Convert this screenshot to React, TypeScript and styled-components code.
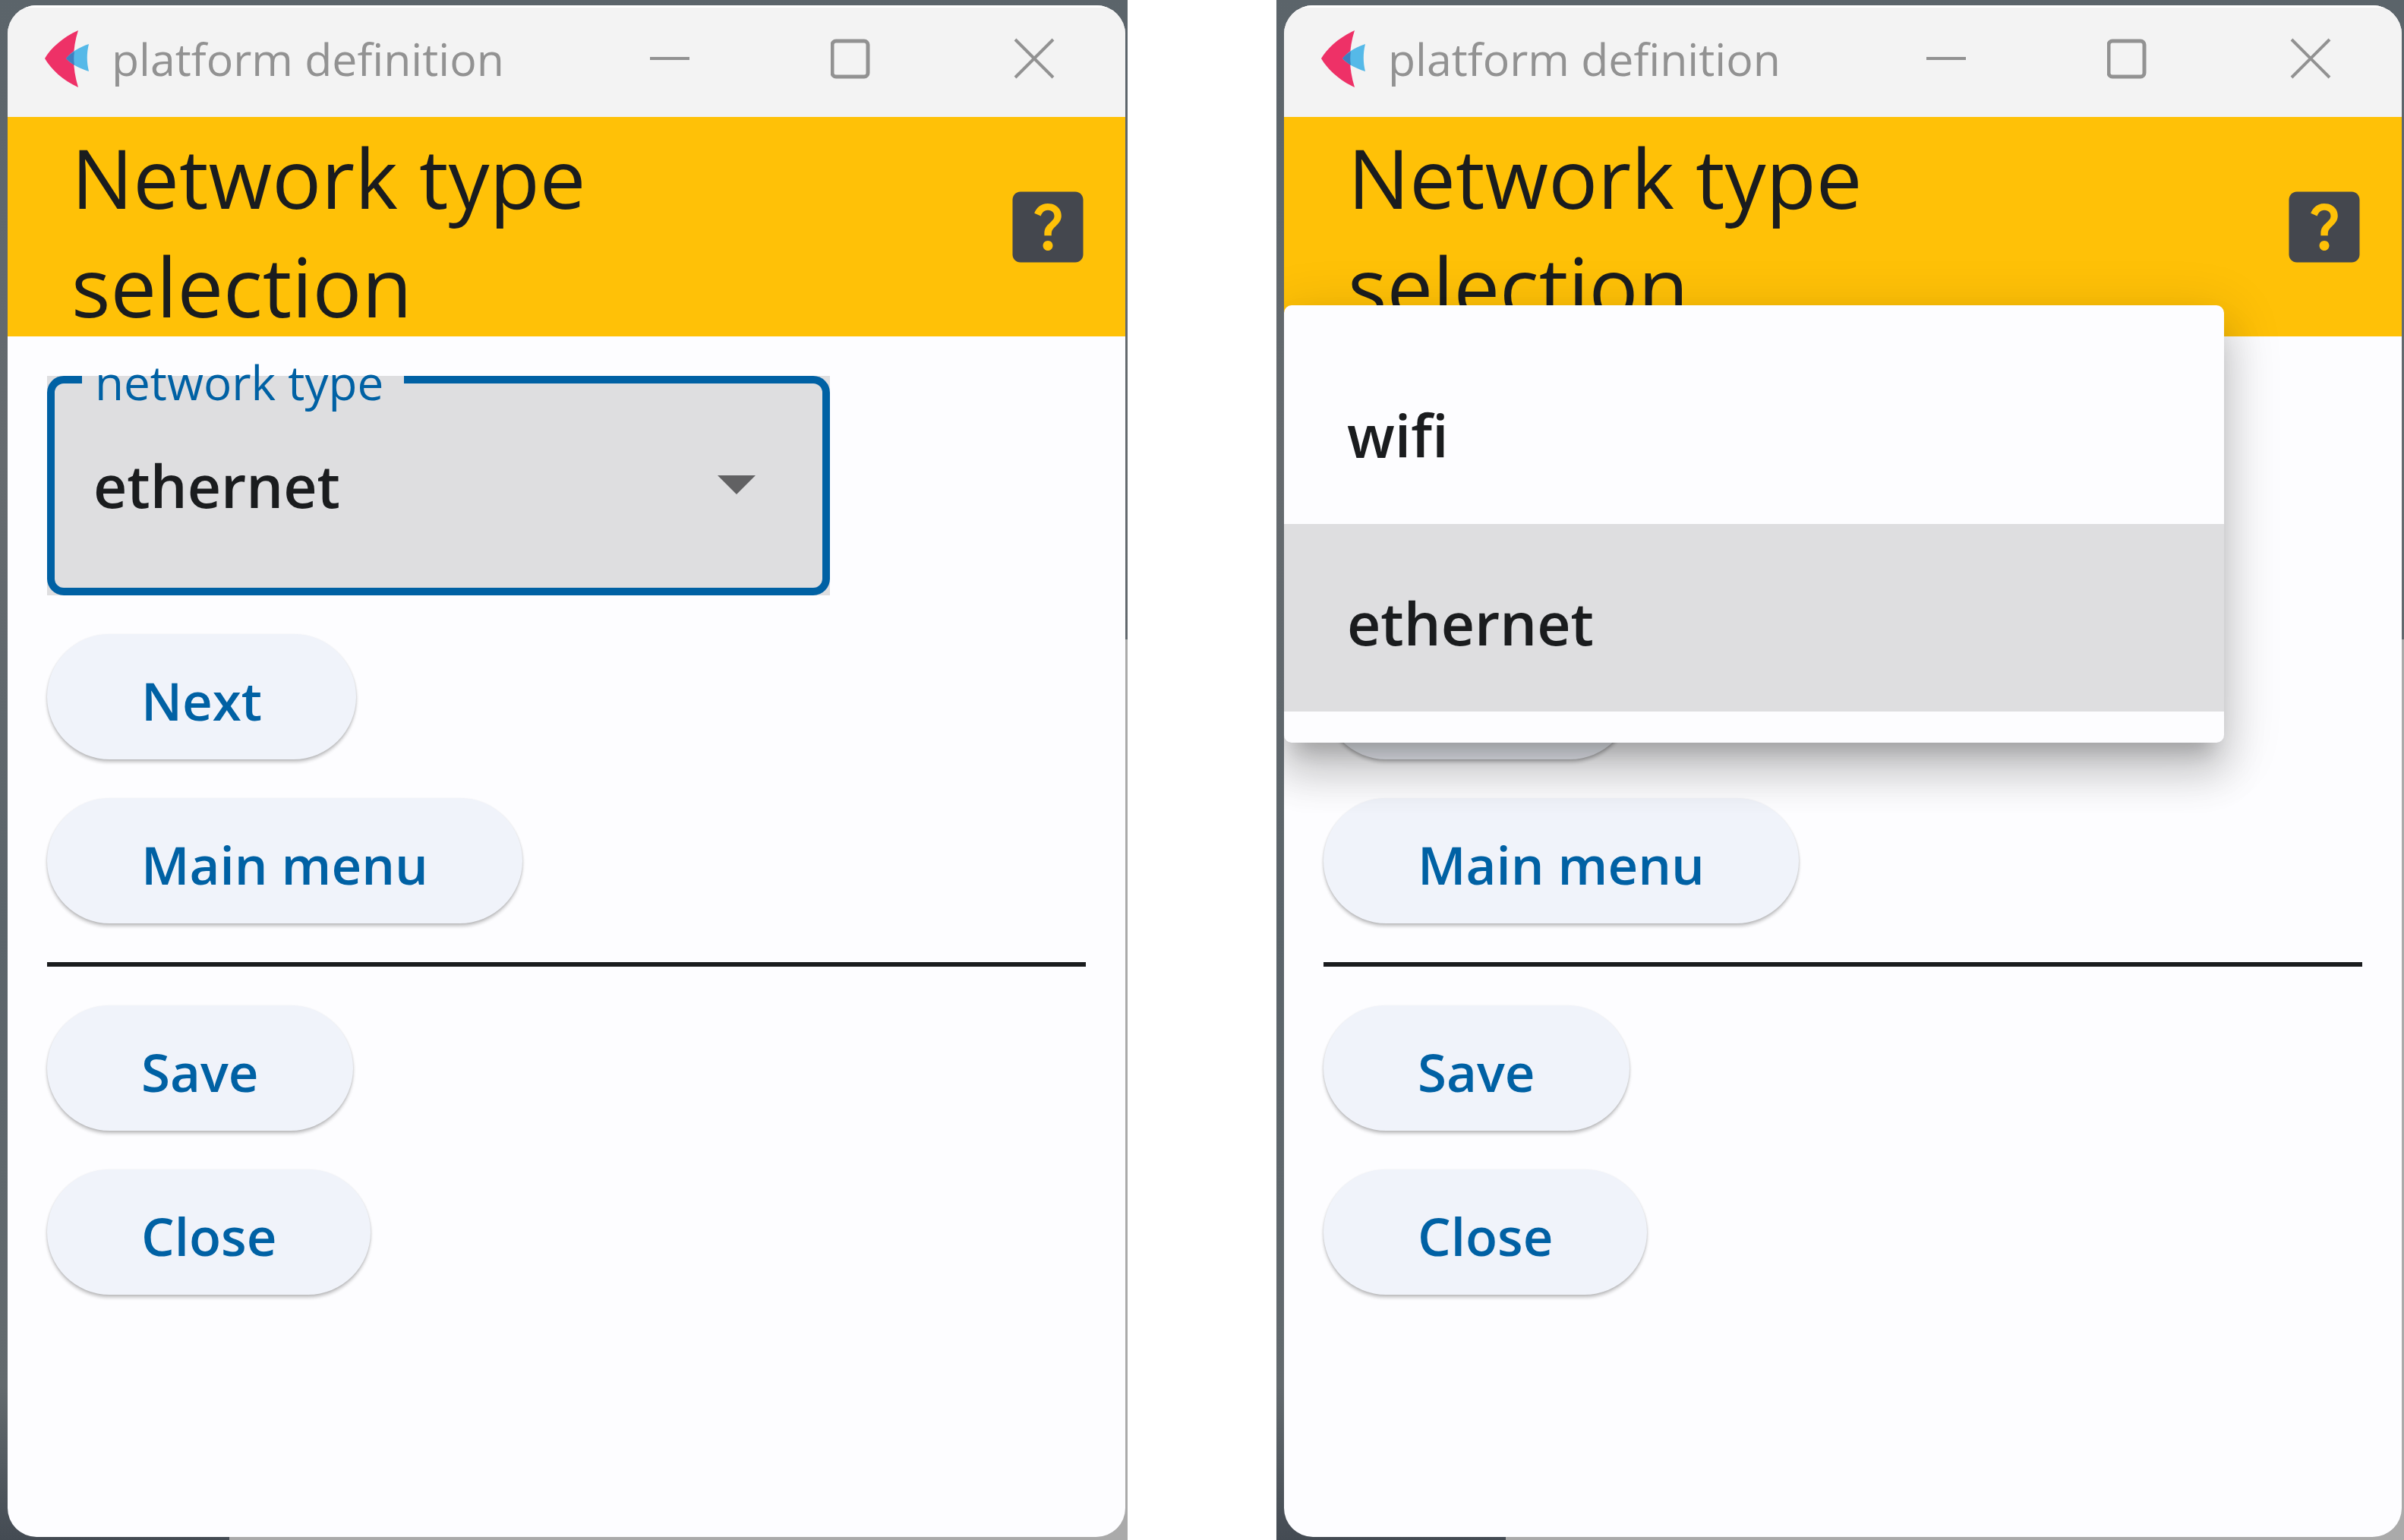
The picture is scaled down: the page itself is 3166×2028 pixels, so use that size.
import React, { useId } from "react";
import styled, { createGlobalStyle } from "styled-components";
import { MdHelpCenter } from "react-icons/md";

const color = {
  surface: "#fdfdff",
  titleBar: "#f3f3f3",
  titleText: "#929292",
  amber: "#ffc107",
  ink: "#1a1c1e",
  icon: "#44474e",
  primary: "#0061a4",
  tonal: "#f0f3fa",
  focus: "#dedee0",
};

const GlobalStyle = createGlobalStyle`
  *, *::before, *::after { box-sizing: border-box; }
  body {
    margin: 0;
    background: #ffffff;
    font-family: "Open Sans", "Noto Sans", sans-serif;
    color: ${color.ink};
  }
  button, select { font-family: inherit; }
`;

const Page = styled.main`
  display: flex;
  gap: 196px;
  min-height: 100vh;
`;

const Desktop = styled.section`
  display: flex;
  flex: 1 1 0;
  min-width: 0;
  padding: 7px 3px 4px 10px;
  background:
    linear-gradient(#aaaaaa, #aaaaaa) right bottom / calc(100% - 302px) 4px no-repeat,
    linear-gradient(transparent 842px, #aaaaaa 842px) right top / 40px 100% no-repeat,
    linear-gradient(#5b646a, #666b6f 30%, #5b646a 60%, #636a6e 90%, #444b53);
`;

const Window = styled.div`
  display: flex;
  flex-direction: column;
  flex: 1;
  min-width: 0;
  overflow: hidden;
  border-radius: 38px;
  background: ${color.surface};
`;

const TitleBar = styled.header`
  display: flex;
  align-items: center;
  height: 147px;
  padding: 0 0 10px 49px;
  border-top: 3px solid #ffffff;
  background: ${color.titleBar};
`;

const Logo = styled.svg`
  flex: none;
  width: 60px;
  height: 76px;
`;

const WindowTitle = styled.span`
  flex: 1;
  padding-left: 28px;
  color: ${color.titleText};
  font-size: 59px;
  line-height: 80px;
  white-space: nowrap;
`;

const CaptionButton = styled.button`
  display: flex;
  align-items: center;
  justify-content: center;
  width: 240px;
  height: 100%;
  padding: 0;
  border: 0;
  background: none;
  color: #929292;

  svg {
    width: 56px;
    height: 56px;
    fill: none;
    stroke: currentColor;
    stroke-width: 4;
  }
`;

const AppBar = styled.div`
  display: flex;
  align-items: center;
  height: 289px;
  padding: 0 40px 0 84px;
  background: ${color.amber};
`;

const Heading = styled.h1`
  flex: 1;
  margin: 0;
  padding: 12px 320px 0 0;
  font-size: 108px;
  font-weight: 400;
  line-height: 143px;
`;

const HelpButton = styled.button`
  display: flex;
  padding: 0;
  border: 0;
  background: none;
  color: ${color.icon};

  svg {
    width: 124px;
    height: 124px;
  }
`;

const Body = styled.div`
  display: flex;
  flex-direction: column;
  align-items: flex-start;
  gap: 51px;
  padding: 52px 52px 51px;
`;

const FieldBox = styled.div`
  position: relative;
  display: flex;
  width: 1031px;
  max-width: 100%;
  height: 289px;
  background: ${color.focus};
`;

const FieldLabel = styled.label`
  position: absolute;
  top: 0;
  left: 46px;
  padding: 0 27px 0 17px;
  background: ${color.focus};
  color: ${color.primary};
  font-size: 62px;
  line-height: 16px;
  white-space: nowrap;
`;

const Select = styled.select`
  flex: 1;
  padding: 0 80px 0 51px;
  border: 10px solid ${color.primary};
  border-radius: 22px;
  outline: none;
  appearance: none;
  background: transparent;
  color: ${color.ink};
  font-size: 77px;
  font-weight: 600;
`;

const Arrow = styled.svg`
  position: absolute;
  top: 131px;
  right: 98px;
  width: 50px;
  height: 25px;
  pointer-events: none;
`;

const Menu = styled.div`
  position: absolute;
  z-index: 1;
  top: -93px;
  left: -52px;
  display: flex;
  flex-direction: column;
  width: 1238px;
  padding: 41px 0;
  border-radius: 10px;
  background: ${color.surface};
  box-shadow:
    0 26px 26px -16px rgba(0, 0, 0, 0.2),
    0 41px 52px 5px rgba(0, 0, 0, 0.14),
    0 16px 72px 10px rgba(0, 0, 0, 0.12);
`;

const Option = styled.button<{ $selected: boolean }>`
  height: 247px;
  padding: 14px 83px 0;
  border: 0;
  background: ${(p) => (p.$selected ? color.focus : "transparent")};
  color: ${color.ink};
  font-size: 77px;
  font-weight: 600;
  text-align: left;
`;

const PillButton = styled.button`
  height: 165px;
  padding: 8px 124px 0;
  border: 0;
  border-radius: 83px;
  background: ${color.tonal};
  box-shadow: 0 4px 4px rgba(0, 0, 0, 0.2), 0 1px 3px rgba(0, 0, 0, 0.12);
  color: ${color.primary};
  font-size: 69px;
  font-weight: 600;
  line-height: 100px;
  white-space: nowrap;
`;

const Divider = styled.hr`
  width: 100%;
  height: 6px;
  margin: 0;
  border: 0;
  background: ${color.ink};
`;

const networkTypes = ["wifi", "ethernet"];

function FletLogo() {
  return (
    <Logo viewBox="0 0 60 76" aria-hidden="true">
      <path d="M44 1C24 10 8 24 0 38C8 52 24 67 44 76C36 50 36 26 44 1Z" fill="#ee3167" />
      <path d="M58 19C46 23 35 29 28 38C35 46 46 51 58 55C55 43 55 31 58 19Z" fill="#55b9e8" />
      <path d="M39 29C35 31 31 34 28 38C31 41 35 44 39 47C38 40 38 35 39 29Z" fill="#3f7fbf" />
    </Logo>
  );
}

function NetworkField({ open, value }: { open: boolean; value: string }) {
  const id = useId();
  if (open) {
    return (
      <FieldBox>
        <Menu role="listbox" aria-label="network type">
          {networkTypes.map((type) => (
            <Option key={type} role="option" $selected={type === value} aria-selected={type === value}>
              {type}
            </Option>
          ))}
        </Menu>
      </FieldBox>
    );
  }
  return (
    <FieldBox>
      <Select id={id} defaultValue={value}>
        {networkTypes.map((type) => (
          <option key={type}>{type}</option>
        ))}
      </Select>
      <FieldLabel htmlFor={id}>network type</FieldLabel>
      <Arrow viewBox="0 0 50 25" aria-hidden="true">
        <path d="M0 0H50L25 25Z" fill="#616163" />
      </Arrow>
    </FieldBox>
  );
}

function PlatformWindow({ menuOpen = false }: { menuOpen?: boolean }) {
  return (
    <Desktop>
      <Window>
        <TitleBar>
          <FletLogo />
          <WindowTitle>platform definition</WindowTitle>
          <CaptionButton aria-label="Minimize">
            <svg viewBox="0 0 56 56"><path d="M2 28H54" /></svg>
          </CaptionButton>
          <CaptionButton aria-label="Maximize">
            <svg viewBox="0 0 56 56"><rect x="2" y="5" width="47" height="47" rx="5" strokeWidth="5" /></svg>
          </CaptionButton>
          <CaptionButton aria-label="Close window">
            <svg viewBox="0 0 56 56"><path d="M3 3L53 53M53 3L3 53" /></svg>
          </CaptionButton>
        </TitleBar>
        <AppBar>
          <Heading>Network type selection</Heading>
          <HelpButton aria-label="Help"><MdHelpCenter /></HelpButton>
        </AppBar>
        <Body>
          <NetworkField open={menuOpen} value="ethernet" />
          <PillButton>Next</PillButton>
          <PillButton>Main menu</PillButton>
          <Divider />
          <PillButton>Save</PillButton>
          <PillButton>Close</PillButton>
        </Body>
      </Window>
    </Desktop>
  );
}

export default function App() {
  return (
    <>
      <GlobalStyle />
      <Page>
        <PlatformWindow />
        <PlatformWindow menuOpen />
      </Page>
    </>
  );
}
